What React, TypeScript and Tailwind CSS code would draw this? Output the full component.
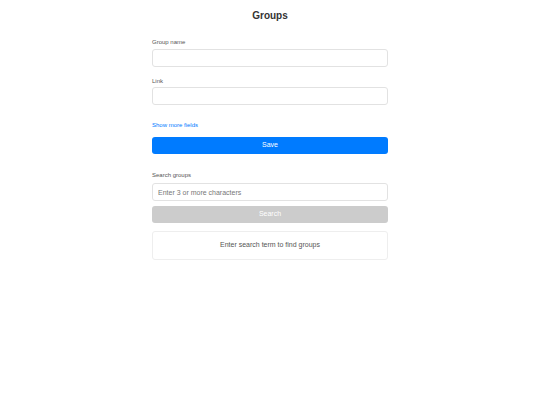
import { useState } from "react";

export default function App() {
  const [name, setName] = useState("");
  const [link, setLink] = useState("");
  const [query, setQuery] = useState("");

  return (
    <div
      className="w-[540px] h-[405px] bg-white overflow-hidden"
      style={{ fontFamily: "'Liberation Sans', Arial, sans-serif" }}
    >
      <div className="w-[236px] mx-auto pt-[9px]">
        <h1 className="text-center text-[10px] leading-[14px] font-bold text-[#333]">Groups</h1>

        {/* Group name */}
        <div className="mt-[15px]">
          <label className="block text-[6px] leading-[8px] text-[#555] mb-[3px]">Group name</label>
          <input
            value={name}
            onChange={(e) => setName(e.target.value)}
            className="block w-full h-[18px] border border-[#e2e2e2] rounded-[3px] px-[6px] text-[7px] outline-none"
          />
        </div>

        {/* Link */}
        <div className="mt-[10px]">
          <label className="block text-[6px] leading-[8px] text-[#555] mb-[2px]">Link</label>
          <input
            value={link}
            onChange={(e) => setLink(e.target.value)}
            className="block w-full h-[18px] border border-[#e2e2e2] rounded-[3px] px-[6px] text-[7px] outline-none"
          />
        </div>

        <a className="block mt-[16px] text-[6px] leading-[8px] text-[#007bff] cursor-pointer">Show more fields</a>

        <button className="block w-full h-[17px] mt-[8px] bg-[#007bff] rounded-[3px] text-white text-[7px]">
          Save
        </button>

        {/* Search */}
        <div className="mt-[17px]">
          <label className="block text-[6px] leading-[8px] text-[#555] mb-[4px]">Search groups</label>
          <input
            value={query}
            onChange={(e) => setQuery(e.target.value)}
            placeholder="Enter 3 or more characters"
            className="block w-full h-[18px] border border-[#e2e2e2] rounded-[3px] px-[5px] text-[7px] text-[#333] placeholder:text-[#777] outline-none"
          />
        </div>

        <button
          disabled={query.length < 3}
          className="block w-full h-[17px] mt-[5px] bg-[#cccccc] rounded-[3px] text-white text-[7px]"
        >
          Search
        </button>

        <div className="mt-[8px] h-[29px] border border-[#eeeeee] rounded-[3px] flex items-center justify-center">
          <p className="text-[7px] text-[#555]">Enter search term to find groups</p>
        </div>
      </div>
    </div>
  );
}
